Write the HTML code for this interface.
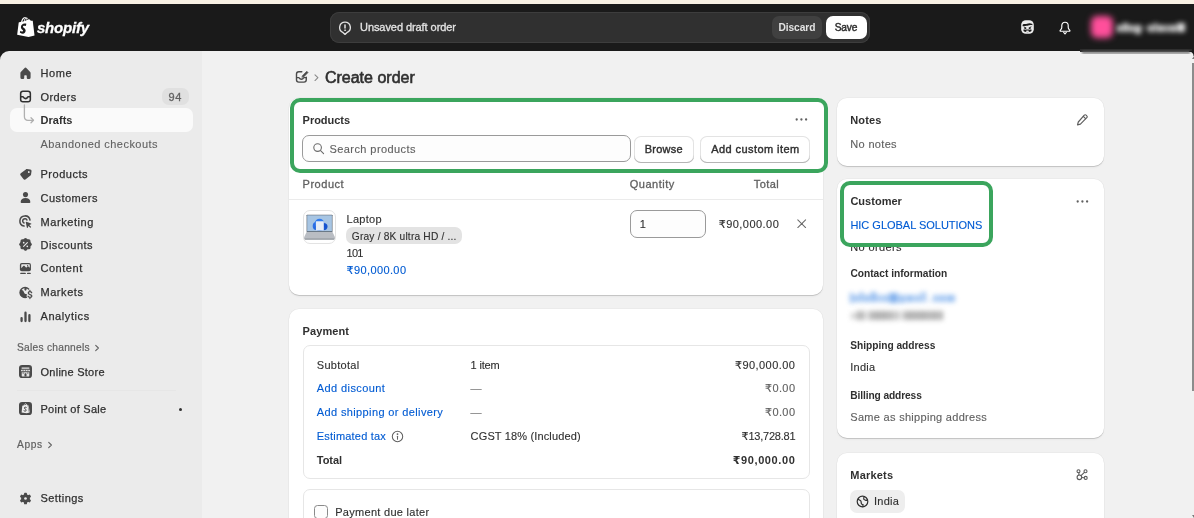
<!DOCTYPE html>
<html lang="en">
<head>
<meta charset="utf-8">
<title>Create order</title>
<style>
*{box-sizing:border-box;margin:0;padding:0}
html,body{width:1194px;height:518px;overflow:hidden;background:#f1f1f1}
body{font-family:"Liberation Sans","DejaVu Sans",sans-serif;font-size:11px;color:#303030;position:relative}
#app{will-change:transform;position:absolute;left:0;top:0;width:1194px;height:518px;overflow:hidden;background:#f1f1f1}
.abs{position:absolute}
.card{position:absolute;background:#fff;border-radius:10px;box-shadow:0 1px 0 0 rgba(0,0,0,.13),0 2px 2px 0 rgba(0,0,0,.035),0 0 0 .5px rgba(0,0,0,.05)}
.btn{position:absolute;background:#fff;border-radius:7px;box-shadow:inset 0 -1px 0 0 #b5b5b5,inset 0 0 0 1px #e3e3e3}
.ic{position:absolute;width:17px;height:17px}
.ic svg{display:block;width:17px;height:17px}
.green{position:absolute;border:4px solid #3ba55d;border-radius:10px;background:#fff}
</style>
</head>
<body>
<div id="app">
<!-- top strip + top bar -->
<div class="abs" style="left:0;top:0;width:1194px;height:4px;background:#f8f1e4"></div>
<div class="abs" style="left:0;top:4px;width:1194px;height:47px;background:#1a1a1a"></div>
<!-- sidebar -->
<div class="abs" style="left:0;top:50px;width:12px;height:12px;background:#1a1a1a"></div>
<div class="abs" style="left:0;top:51px;width:202px;height:467px;background:#ebebeb;border-top-left-radius:9px"></div>
<!-- main bg rounded top right -->
<div class="abs" style="left:202px;top:51px;width:992px;height:467px;background:#f1f1f1"></div>

<!-- TOPBAR CONTENT -->
<div class="abs" id="logo" style="left:16.5px;top:16.5px;width:18.5px;height:21px">
<svg viewBox="0 0 37 42" width="18.5" height="21"><path fill="#fff" d="M31.6 8.1c0-.2-.2-.3-.4-.4l-3.400-.3s-2.300-2.300-2.600-2.500c-.2-.2-.7-.2-.9-.1l-1.300.4C22.300 3 21 1.200 18.800 1.200h-.2C18 .4 17.200 0 16.500 0 11.400 0 9 6.400 8.200 9.600L4.600 10.700c-1.100.4-1.100.4-1.300 1.400L.3 35.600 23 39.900l12.300-2.700S31.600 8.300 31.600 8.100zM22.400 5.500l-1.900.6V5.700c0-1.300-.2-2.300-.5-3.100 1.200.1 2 1.500 2.400 2.900zM18.700 2.800c.3.900.5 2.100.5 3.700v.2l-4 1.200c.8-2.900 2.200-4.400 3.500-5.100zM17.200 1.400c.2 0 .5.100.7.200-1.700.8-3.400 2.700-4.200 6.700l-3.100 1C11.500 6.300 13.500 1.400 17.200 1.400z"/><path fill="#1a1a1a" d="M18.900 13.600l-1.500 4.500s-1.300-.7-3-.7c-2.400 0-2.500 1.500-2.500 1.900 0 2.100 5.400 2.900 5.400 7.700 0 3.800-2.400 6.300-5.700 6.300-3.900 0-5.900-2.400-5.900-2.400l1.100-3.500s2.100 1.800 3.800 1.800c1.100 0 1.600-.9 1.600-1.600 0-2.700-4.400-2.800-4.400-7.300 0-3.800 2.700-7.400 8.100-7.400 2.100 0 3.100.6 3.100.6z"/></svg>
</div>
<div class="abs" style="left:330px;top:12px;width:539.5px;height:31px;background:#303030;border-radius:9px;box-shadow:inset 0 0 0 1px #3d3d3d"></div>
<div class="abs" style="left:772px;top:15.600px;width:50px;height:23.600px;background:#404040;border-radius:7px"></div>
<div class="abs" style="left:826.300px;top:15.600px;width:40.300px;height:23.600px;background:#fff;border-radius:7px"></div>
<!-- alert bubble icon -->
<div class="abs" style="left:338px;top:20.6px;width:14px;height:15px">
<svg viewBox="0 0 14 15" width="14" height="15" fill="none" stroke="#e3e3e3" stroke-width="1.35" stroke-linecap="round" stroke-linejoin="round"><path d="M7 1.2a5.300 5.300 0 0 1 2.300 10.100L7 13.400 4.700 11.300A5.300 5.300 0 0 1 7 1.200z"/><path d="M7 3.900v3.200" stroke-width="1.500"/><circle cx="7" cy="9.200" r=".55" fill="#e3e3e3" stroke-width=".6"/></svg>
</div>
<!-- right icons -->
<div class="abs" style="left:1020.700px;top:20.400px;width:13px;height:14px">
<svg viewBox="0 0 13 14" width="13" height="14"><rect x=".2" y=".2" width="12.600" height="13.600" rx="4.600" fill="#ececec"/><path d="M1.600 4.700c1.400-1.200 2.900-.3 4.400-.9s3.100-1 5.400.2v1.300c-2-.7-3.400.1-4.900.4s-3-.1-4.900.5z" fill="#1a1a1a"/><path d="M2.700 6.800l2.500 1.300-2.500 1.200M10.300 6.800L7.800 8.100l2.500 1.200" stroke="#1a1a1a" stroke-width="1" fill="none"/><path d="M2.200 10.400c1.400-1.300 7.200-1.300 8.600 0-1.100 2.300-7.500 2.300-8.600 0z" fill="#1a1a1a"/><ellipse cx="6.500" cy="11.300" rx="1.700" ry=".7" fill="#ececec"/></svg>
</div>
<div class="abs" style="left:1058.500px;top:20.600px;width:12px;height:14px">
<svg viewBox="0 0 12 14" width="12" height="14" fill="none" stroke="#fff" stroke-width="1.150" stroke-linecap="round" stroke-linejoin="round"><path d="M6 1.200c-1.900 0-3.200 1.500-3.200 3.400v1.600c0 .9-.4 1.700-1 2.400l-.6.700c-.3.400-.1.900.4.900h8.800c.5 0 .7-.5.400-.9l-.6-.7c-.6-.7-1-1.500-1-2.400V4.600c0-1.900-1.300-3.400-3.200-3.400z"/><path d="M4.700 11.400L6 13l1.300-1.600"/></svg>
</div>
<!-- blurred account area -->
<div class="abs" style="left:1080px;top:4px;width:114px;height:50px;overflow:hidden">
  <div class="abs" style="left:0;top:44.500px;width:112px;height:3px;background:#2b2b2b;filter:blur(.6px)"></div>
  <div class="abs" style="left:2px;top:47px;width:108px;height:2.500px;background:#6a6a6a;filter:blur(1.200px);opacity:.8"></div>
  <div class="abs" style="left:11px;top:12px;width:22px;height:22px;border-radius:6px;background:#ff4f9b;filter:blur(3px)"></div>
  <div class="abs" style="left:37px;top:19px;width:70px;height:9px;filter:blur(2.800px);opacity:1">
    <div class="abs" style="left:0;top:2px;width:5px;height:7px;background:#cfcfcf"></div>
    <div class="abs" style="left:6px;top:0;width:5px;height:9px;background:#d8d8d8"></div>
    <div class="abs" style="left:12px;top:2px;width:5px;height:7px;background:#cfcfcf"></div>
    <div class="abs" style="left:18px;top:2px;width:6px;height:9px;background:#d4d4d4"></div>
    <div class="abs" style="left:26px;top:4px;width:3px;height:2px;background:#aaa"></div>
    <div class="abs" style="left:31px;top:2px;width:5px;height:7px;background:#d0d0d0"></div>
    <div class="abs" style="left:37px;top:0;width:3px;height:9px;background:#d8d8d8"></div>
    <div class="abs" style="left:41px;top:2px;width:6px;height:7px;background:#d0d0d0"></div>
    <div class="abs" style="left:48px;top:2px;width:4px;height:7px;background:#c8c8c8"></div>
    <div class="abs" style="left:53px;top:2px;width:6px;height:7px;background:#d0d0d0"></div>
    <div class="abs" style="left:60px;top:0;width:8px;height:9px;background:#e0e0e0"></div>
  </div>
</div>

<div class="abs" style="left:1189px;top:51px;width:5px;height:5px;background:radial-gradient(circle at 0 100%,rgba(26,26,26,0) 4px,#1a1a1a 5px)"></div>
<!-- SIDEBAR CONTENT -->
<div class="abs" style="left:10px;top:108.200px;width:182.500px;height:23.800px;background:#fafafa;border-radius:7px"></div>
<div class="abs" style="left:162.200px;top:88px;width:26.800px;height:17px;background:#e0e0e0;border-radius:7px"></div>
<div class="abs" style="left:17px;top:390px;width:159px;height:1px;background:#e6e6e6"></div>
<div class="abs" style="left:178.800px;top:408.300px;width:3px;height:3px;border-radius:50%;background:#303030"></div>
<div class="abs" style="left:17.0px;top:64.90px;width:17px;height:17px"><svg viewBox="0 0 20 20" width="17" height="17"><path fill="#4a4a4a" d="M8.700 3.700a1.800 1.800 0 0 1 2.600 0l4.200 4.400c.3.350.5.800.5 1.250v5.350a1.800 1.800 0 0 1-1.800 1.800h-1.400a1.300 1.300 0 0 1-1.300-1.300v-2.400a.8.8 0 0 0-.8-.8h-1.400a.8.8 0 0 0-.8.8v2.400a1.300 1.300 0 0 1-1.300 1.300H5.800A1.800 1.800 0 0 1 4 14.700V9.350c0-.45.180-.9.500-1.250z"/></svg></div>
<div class="abs" style="left:17.0px;top:88.10px;width:17px;height:17px"><svg viewBox="0 0 20 20" width="17" height="17"><g fill="none" stroke="#303030" stroke-width="1.800" stroke-linejoin="round"><rect x="4.300" y="3.800" width="11.400" height="12.400" rx="2.700"/><path d="M4.500 10.300h2.200c.45 0 .8.300.95.700.35.900 1.250 1.500 2.350 1.500s2-.6 2.350-1.500c.15-.4.500-.7.950-.7h2.200"/></g></svg></div>
<div class="abs" style="left:17.0px;top:165.80px;width:17px;height:17px"><svg viewBox="0 0 20 20" width="17" height="17"><path fill="#4a4a4a" fill-rule="evenodd" d="M10.800 3.500h4a1.700 1.700 0 0 1 1.700 1.700v4c0 .45-.18.900-.5 1.200l-5.300 5.300a1.700 1.700 0 0 1-2.400 0l-4-4a1.700 1.700 0 0 1 0-2.400l5.300-5.300c.3-.32.750-.5 1.200-.5zm2.700 4.200a1.100 1.100 0 1 0 0-2.200 1.100 1.100 0 0 0 0 2.200z" transform="rotate(8 10 10)"/></svg></div>
<div class="abs" style="left:17.0px;top:189.40px;width:17px;height:17px"><svg viewBox="0 0 20 20" width="17" height="17"><circle cx="10" cy="6.600" r="3" fill="#4a4a4a"/><path fill="#4a4a4a" d="M4.300 15.200c0-2.700 2.500-4.500 5.700-4.500s5.700 1.800 5.700 4.500c0 .8-.6 1.300-1.300 1.300H5.600c-.7 0-1.300-.5-1.300-1.300z"/></svg></div>
<div class="abs" style="left:17.0px;top:213.00px;width:17px;height:17px"><svg viewBox="0 0 20 20" width="17" height="17"><g fill="none" stroke="#4a4a4a" stroke-width="1.800" stroke-linecap="round"><path d="M15.300 8.300A6 6 0 1 0 8.300 15.300"/><path d="M11.700 8.300A2.600 2.600 0 1 0 8.300 11.700"/></g><path fill="#4a4a4a" d="M10.300 10.900c-.15-.4.250-.8.650-.65l5.700 2.100c.45.170.45.800 0 .95l-2.200.75 2 2a.55.550 0 0 1 0 .8l-.3.300a.55.550 0 0 1-.8 0l-2-2-.75 2.200c-.15.450-.8.450-.95 0z"/></svg></div>
<div class="abs" style="left:17.0px;top:236.30px;width:17px;height:17px"><svg viewBox="0 0 20 20" width="17" height="17"><path fill="#4a4a4a" d="M8.600 2.900a2 2 0 0 1 2.800 0l.7.700c.2.200.5.300.8.300h1a2 2 0 0 1 2 2v1c0 .3.100.6.300.8l.7.700a2 2 0 0 1 0 2.800l-.7.700c-.2.200-.3.500-.3.800v1a2 2 0 0 1-2 2h-1c-.3 0-.6.100-.8.300l-.7.700a2 2 0 0 1-2.800 0l-.7-.700c-.2-.2-.5-.3-.8-.3h-1a2 2 0 0 1-2-2v-1c0-.3-.1-.6-.3-.8l-.7-.7a2 2 0 0 1 0-2.800l.7-.7c.2-.2.300-.5.300-.8v-1a2 2 0 0 1 2-2h1c.3 0 .6-.1.800-.3z"/><g stroke="#ebebeb" stroke-width="1.300" stroke-linecap="round"><path d="M7.800 12.200l4.400-4.400"/></g><circle cx="7.900" cy="7.900" r="1" fill="#ebebeb"/><circle cx="12.100" cy="12.100" r="1" fill="#ebebeb"/></svg></div>
<div class="abs" style="left:17.0px;top:260.00px;width:17px;height:17px"><svg viewBox="0 0 20 20" width="17" height="17"><rect x="3.400" y="3.600" width="13" height="9.600" rx="2.200" fill="#4a4a4a"/><path fill="#ebebeb" d="M5.700 5.100h8.600c.4 0 .7.300.7.700v3.400l-1.600-1.500c-.3-.3-.8-.3-1.100 0l-1.500 1.400-2.100-2.200c-.3-.3-.8-.3-1.100 0L5 9.600V5.800c0-.4.300-.7.700-.7z"/><circle cx="12.500" cy="6.500" r=".75" fill="#4a4a4a"/><g stroke="#4a4a4a" stroke-width="1.500" stroke-linecap="round"><path d="M4.500 15.800h5.200M12.500 15.800h3"/></g></svg></div>
<div class="abs" style="left:17.0px;top:283.60px;width:17px;height:17px"><svg viewBox="0 0 20 20" width="17" height="17"><circle cx="9.500" cy="10" r="5.900" fill="none" stroke="#4a4a4a" stroke-width="1.600"/><path fill="#4a4a4a" d="M4 7.300c1.600-.6 3.200.1 3.800 1.500l.8 1.800c.3.700 1 1.200 1.700 1.300l1 .1c.8.100 1.300.9 1 1.600l-.9 2.200c-3.700 1.100-7.600-1.300-8.200-5.200zM9.200 4.200l-.5 1.700c-.2.700.1 1.400.8 1.700l1.100.4 1.100-3z"/><path d="M17.300 10.300c-.4-.8-1.100-1.200-2.100-1.200-1.200 0-2 .6-2 1.600 0 2.300 4.300 1.100 4.300 3.400 0 1-.9 1.600-2.200 1.600-1.100 0-1.900-.5-2.300-1.300M15.200 7.600v1.500M15.200 15.700v1.500" stroke="#ebebeb" stroke-width="3.600" fill="none" stroke-linecap="round"/><path d="M17.300 10.300c-.4-.8-1.100-1.200-2.100-1.200-1.200 0-2 .6-2 1.600 0 2.300 4.300 1.100 4.300 3.400 0 1-.9 1.600-2.200 1.600-1.100 0-1.900-.5-2.300-1.300M15.200 7.600v1.500M15.200 15.700v1.500" stroke="#4a4a4a" stroke-width="1.450" fill="none" stroke-linecap="round"/></svg></div>
<div class="abs" style="left:17.0px;top:307.60px;width:17px;height:17px"><svg viewBox="0 0 20 20" width="17" height="17"><g stroke="#4a4a4a" stroke-width="2.700" stroke-linecap="round"><path d="M5.400 11.800v3.500M10 5.500v9.800M14.600 8.500v6.800"/></g></svg></div>
<svg class="abs" style="left:18.800px;top:364.800px" width="13" height="13" viewBox="0 0 13 13"><rect width="13" height="13" rx="3.100" fill="#4a4a4a"/><rect x="2.600" y="2.500" width="7.800" height="1.200" rx=".3" fill="#e4e4e4"/><path d="M2.300 4.700h8.400l.5 1.500H1.800z" fill="#e4e4e4"/><path d="M4.100 4.600v1.700M6.500 4.600v1.700M8.900 4.600v1.700" stroke="#4a4a4a" stroke-width=".55"/><path d="M2.700 7.200h7.600v3.700c0 .3-.2.500-.5.500H3.200c-.3 0-.5-.2-.5-.5z" fill="#e4e4e4"/><path d="M3.600 7.200h1.200v1.900H3.600zM8.200 7.200h1.200v1.900H8.200z" fill="#4a4a4a" opacity=".55"/><path d="M5.500 11.400V9.300c0-.6.400-1 1-1s1 .4 1 1v2.100z" fill="#4a4a4a"/></svg>
<svg class="abs" style="left:18.800px;top:402.200px" width="13" height="13" viewBox="0 0 13 13"><rect width="13" height="13" rx="3.100" fill="#4a4a4a"/><path d="M3.300 3.800l4.300-1.200 1 .5.200.9 1.200 6.700-2.400.6-5-.9z" fill="#ececec"/><path d="M8.600 3.100l1 .5 1.300 6.600-.9.500z" fill="#bdbdbd"/><path d="M5.200 3.400c.1-1 .6-1.800 1.300-1.800.6 0 1 .6 1.100 1.400" fill="none" stroke="#ececec" stroke-width=".6"/><path d="M7.200 5.300c-.5-.3-1.800-.3-1.800.7 0 1.100 1.800.9 1.800 2.200 0 1-1.300 1.200-2.200.6" fill="none" stroke="#3a3a3a" stroke-width=".95" stroke-linecap="round"/></svg>
<div class="abs" style="left:17.0px;top:490.10px;width:17px;height:17px"><svg viewBox="0 0 20 20" width="17" height="17"><g fill="#4a4a4a"><circle cx="10" cy="10" r="5.100"/><rect x="8.250" y="3.200" width="3.500" height="4.500" rx="1" transform="rotate(0 10 10)"/><rect x="8.250" y="3.200" width="3.500" height="4.500" rx="1" transform="rotate(60 10 10)"/><rect x="8.250" y="3.200" width="3.500" height="4.500" rx="1" transform="rotate(120 10 10)"/><rect x="8.250" y="3.200" width="3.500" height="4.500" rx="1" transform="rotate(180 10 10)"/><rect x="8.250" y="3.200" width="3.500" height="4.500" rx="1" transform="rotate(240 10 10)"/><rect x="8.250" y="3.200" width="3.500" height="4.500" rx="1" transform="rotate(300 10 10)"/></g><circle cx="10" cy="10" r="1.600" fill="#ebebeb"/></svg></div>
<svg class="abs" style="left:20px;top:104px" width="16" height="22" viewBox="0 0 16 22" fill="none" stroke="#b0b0b0" stroke-width="1.300" stroke-linecap="round" stroke-linejoin="round"><path d="M4.400 1v11.500c0 2.200 1.300 3.800 3.600 3.800h5.200"/><path d="M11 13.800l2.500 2.500-2.500 2.500"/></svg>
<svg class="abs" style="left:94.2px;top:343.60px" width="6" height="8" viewBox="0 0 6 8" fill="none" stroke="#616161" stroke-width="1.100" stroke-linecap="round" stroke-linejoin="round"><path d="M1.700 1.300l2.700 2.700-2.700 2.700"/></svg>
<svg class="abs" style="left:46.8px;top:440.60px" width="6" height="8" viewBox="0 0 6 8" fill="none" stroke="#616161" stroke-width="1.100" stroke-linecap="round" stroke-linejoin="round"><path d="M1.700 1.300l2.700 2.700-2.700 2.700"/></svg>


<!-- PRODUCTS CARD -->
<div class="card" style="left:289px;top:98px;width:534px;height:196.500px"></div>
<div class="green" style="left:290px;top:98px;width:538px;height:74.800px"></div>
<div class="abs" style="left:302.300px;top:135.400px;width:328.500px;height:27px;background:#fdfdfd;border:1px solid #9a9a9a;border-radius:7px"></div>
<div class="btn" style="left:634.300px;top:135.500px;width:59.300px;height:27px"></div>
<div class="btn" style="left:700.300px;top:135.500px;width:109.400px;height:27px"></div>
<div class="abs" style="left:289px;top:199px;width:534px;height:1px;background:#ebebeb"></div>
<!-- thumbnail -->
<div class="abs" style="left:302.600px;top:210px;width:33.500px;height:33.500px;border:1px solid #e3e3e3;border-radius:7px;background:#fff;overflow:hidden">
<svg viewBox="0 0 31.500 31.500" width="31.500" height="31.500" style="filter:blur(.35px)"><rect x="2.600" y="3.700" width="25.900" height="17.300" rx=".6" fill="#5c6670"/><rect x="3.200" y="4.300" width="24.700" height="15.900" fill="#a7c5e3"/><ellipse cx="12.300" cy="15" rx="3.600" ry="4" fill="#2a6fe6"/><ellipse cx="15.500" cy="11.600" rx="4.600" ry="3.800" fill="#2f7bef"/><ellipse cx="19.500" cy="15.600" rx="4" ry="3.600" fill="#1553cf"/><ellipse cx="15.500" cy="17" rx="5" ry="2.800" fill="#1d62dc"/><rect x="11.900" y="10.200" width="7.900" height="9.300" rx=".5" fill="#e6edf6"/><path d="M2.600 21h25.900l3 6.300H-.4z" fill="#b9bdc3"/><path d="M-.4 27.300h31.900v.9c0 .3-.3.500-.6.500H.2c-.3 0-.6-.2-.6-.5z" fill="#8d939a"/></svg>
</div>
<!-- variant pill -->
<div class="abs" style="left:346px;top:227.300px;width:116px;height:16.600px;background:#e3e3e3;border-radius:7px"></div>
<!-- qty input -->
<div class="abs" style="left:629.700px;top:210px;width:76.400px;height:27.600px;background:#fdfdfd;border:1px solid #9a9a9a;border-radius:7px"></div>

<!-- PAYMENT CARD -->
<div class="card" style="left:289px;top:308.500px;width:534px;height:240px"></div>
<div class="abs" style="left:302.500px;top:345px;width:507.200px;height:134px;border:1px solid #e6e6e6;border-radius:7px"></div>
<div class="abs" style="left:302.500px;top:489px;width:507.200px;height:60px;border:1px solid #e6e6e6;border-radius:7px"></div>
<div class="abs" style="left:314px;top:504.800px;width:13.800px;height:13.800px;border:1px solid #8a8a8a;border-radius:3.500px;background:#fdfdfd"></div>

<!-- NOTES CARD -->
<div class="card" style="left:837px;top:97.500px;width:267.300px;height:68.500px"></div>
<!-- CUSTOMER CARD -->
<div class="card" style="left:837px;top:179px;width:267.300px;height:259.300px"></div>
<div class="green" style="left:840px;top:181px;width:153.300px;height:65.600px;z-index:2"></div>
<!-- blurred contact -->
<div class="abs" style="left:850px;top:292px;width:108px;height:11px;filter:blur(2.400px);opacity:.78">
<div class="abs" style="left:0;top:1px;width:3px;height:10px;background:#6aa2ea"></div>
<div class="abs" style="left:4px;top:3px;width:5px;height:7px;background:#7fb0ee"></div>
<div class="abs" style="left:10px;top:0;width:3px;height:10px;background:#6aa2ea"></div>
<div class="abs" style="left:14px;top:3px;width:6px;height:7px;background:#7fb0ee"></div>
<div class="abs" style="left:21px;top:0;width:5px;height:10px;background:#6aa2ea"></div>
<div class="abs" style="left:27px;top:3px;width:5px;height:7px;background:#8ab6ef"></div>
<div class="abs" style="left:33px;top:3px;width:5px;height:7px;background:#7fb0ee"></div>
<div class="abs" style="left:39px;top:1px;width:9px;height:10px;background:#5f9be8"></div>
<div class="abs" style="left:49px;top:3px;width:6px;height:8px;background:#7fb0ee"></div>
<div class="abs" style="left:56px;top:3px;width:8px;height:7px;background:#7fb0ee"></div>
<div class="abs" style="left:65px;top:3px;width:5px;height:7px;background:#86b4ee"></div>
<div class="abs" style="left:71px;top:0;width:2px;height:10px;background:#6aa2ea"></div>
<div class="abs" style="left:74px;top:0;width:2px;height:10px;background:#6aa2ea"></div>
<div class="abs" style="left:79px;top:8px;width:2px;height:2px;background:#9dc2f2"></div>
<div class="abs" style="left:83px;top:3px;width:5px;height:7px;background:#86b4ee"></div>
<div class="abs" style="left:89px;top:3px;width:6px;height:7px;background:#7fb0ee"></div>
<div class="abs" style="left:96px;top:3px;width:9px;height:7px;background:#7fb0ee"></div>
</div>
<div class="abs" style="left:850.500px;top:310.500px;width:94px;height:11px;filter:blur(2.400px);opacity:.72">
<div class="abs" style="left:0;top:2px;width:5px;height:6px;background:#bdbdbd"></div>
<div class="abs" style="left:6px;top:0;width:5px;height:9px;background:#8c8c8c"></div>
<div class="abs" style="left:12px;top:0;width:3px;height:9px;background:#9a9a9a"></div>
<div class="abs" style="left:18px;top:0;width:5px;height:9px;background:#8c8c8c"></div>
<div class="abs" style="left:24px;top:0;width:5px;height:9px;background:#808080"></div>
<div class="abs" style="left:30px;top:0;width:5px;height:9px;background:#808080"></div>
<div class="abs" style="left:36px;top:0;width:5px;height:9px;background:#8c8c8c"></div>
<div class="abs" style="left:42px;top:0;width:3px;height:9px;background:#9a9a9a"></div>
<div class="abs" style="left:46px;top:0;width:3px;height:9px;background:#a5a5a5"></div>
<div class="abs" style="left:52px;top:0;width:4px;height:9px;background:#8c8c8c"></div>
<div class="abs" style="left:57px;top:0;width:5px;height:9px;background:#808080"></div>
<div class="abs" style="left:63px;top:0;width:5px;height:9px;background:#858585"></div>
<div class="abs" style="left:69px;top:0;width:5px;height:9px;background:#808080"></div>
<div class="abs" style="left:75px;top:0;width:5px;height:9px;background:#8c8c8c"></div>
<div class="abs" style="left:81px;top:0;width:5px;height:9px;background:#858585"></div>
<div class="abs" style="left:87px;top:0;width:5px;height:9px;background:#909090"></div>
</div>
<!-- MARKETS CARD -->
<div class="card" style="left:837px;top:452.500px;width:267.300px;height:100px"></div>
<div class="abs" style="left:850.300px;top:490px;width:55px;height:22.700px;background:#eeeeee;border-radius:7px"></div>

<!-- scrollbar -->
<div class="abs" style="left:1192px;top:63px;width:2px;height:328px;background:#8c8c8c"></div>
<div class="abs" style="left:1191.500px;top:55.500px;width:0;height:0;border-left:2.500px solid transparent;border-right:2.500px solid transparent;border-bottom:3px solid #7a7a7a"></div>
<div class="abs" style="left:1191.500px;top:514.500px;width:0;height:0;border-left:2.500px solid transparent;border-right:2.500px solid transparent;border-top:3px solid #7a7a7a"></div>

<svg class="abs" style="left:314.400px;top:73.500px" width="5" height="7.500" viewBox="0 0 5 7.500" fill="none" stroke="#8a8a8a" stroke-width="1.100" stroke-linecap="round" stroke-linejoin="round"><path d="M1 .800l2.900 2.900L1 6.600"/></svg>
<svg class="abs" style="left:293.800px;top:68.600px" width="15.600" height="15.600" viewBox="0 0 15 15" fill="none" stroke="#4a4a4a" stroke-width="1.350" stroke-linecap="round" stroke-linejoin="round"><path d="M7.500 2.600H4.600a2.200 2.200 0 0 0-2.200 2.200v5.600a2.200 2.200 0 0 0 2.200 2.200h5a2.200 2.200 0 0 0 2.200-2.200V8"/><path d="M2.600 8.300h1.900c.3 0 .5.200.6.400.300.700 1 1.200 2 1.200s1.700-.5 2-1.200c.1-.2.300-.4.600-.4h1.900"/><path d="M8.300 6.300l4-4.100 1.200 1.200-4 4.100-1.600.4z" fill="#4a4a4a" stroke-width=".6"/></svg>
<svg class="abs" style="left:311.500px;top:142.300px" width="13" height="13" viewBox="0 0 13 13" fill="none" stroke="#6b6b6b" stroke-width="1.100" stroke-linecap="round"><circle cx="5.600" cy="5.600" r="3.800"/><path d="M8.600 8.600l3 3"/></svg>
<svg class="abs" style="left:795.3px;top:118.30px" width="13" height="3" viewBox="0 0 13 3" fill="#616161"><circle cx="1.700" cy="1.500" r="1.150"/><circle cx="6.400" cy="1.500" r="1.150"/><circle cx="11.100" cy="1.500" r="1.150"/></svg>
<svg class="abs" style="z-index:3;left:1076px;top:199.70px" width="13" height="3" viewBox="0 0 13 3" fill="#616161"><circle cx="1.700" cy="1.500" r="1.150"/><circle cx="6.400" cy="1.500" r="1.150"/><circle cx="11.100" cy="1.500" r="1.150"/></svg>
<svg class="abs" style="left:797.200px;top:219px" width="9.400" height="9.400" viewBox="0 0 9.400 9.400" fill="none" stroke="#6b6b6b" stroke-width="1.050" stroke-linecap="round"><path d="M.8 .8l7.800 7.800M8.600 .8L.8 8.600"/></svg>
<svg class="abs" style="left:391.300px;top:429.600px" width="13" height="13" viewBox="0 0 13 13" fill="none" stroke="#616161" stroke-width="1.050" stroke-linecap="round"><circle cx="6.500" cy="6.500" r="5.200"/><path d="M6.500 6.200v3"/><circle cx="6.500" cy="4.100" r=".4" fill="#616161"/></svg>
<svg class="abs" style="left:1074.600px;top:113.100px" width="14" height="14" viewBox="0 0 14 14" fill="none" stroke="#5c5c5c" stroke-width="1.150" stroke-linecap="round" stroke-linejoin="round"><path d="M9.300 2.200a1.300 1.300 0 0 1 1.900 0l.6.600a1.300 1.300 0 0 1 0 1.900l-6.400 6.400-2.900.8.800-2.900z"/><path d="M8.300 3.400l2.300 2.300"/></svg>
<svg class="abs" style="left:1075px;top:467.500px" width="14" height="14" viewBox="0 0 14 14" fill="none" stroke="#5c5c5c" stroke-width="1.100" stroke-linecap="round"><circle cx="4.400" cy="9.300" r="2.300"/><circle cx="3.500" cy="3.200" r="1.500"/><circle cx="10.500" cy="3.200" r="1.500"/><circle cx="10.700" cy="9.900" r="1.500"/><path d="M3.900 7v-2.300M6 7.600l3.400-3.300M6.700 9.500l2.500.3"/></svg>
<svg class="abs" style="left:855.500px;top:495px" width="13" height="13" viewBox="0 0 13 13" fill="none" stroke="#303030" stroke-width="1.200" stroke-linecap="round" stroke-linejoin="round"><circle cx="6.500" cy="6.500" r="5.300"/><path d="M2 4.200l2.300 1.300c.5.300.8.800.8 1.300l.2 1.500c.1.600.5 1 1.100 1.100l.7.100-.3 2.200M8.200 1.600L7.700 3.200c-.2.500 0 1 .5 1.300l1.300.7c.5.300 1.100.2 1.500-.2l.5-.5"/></svg>
<span style="position:absolute;top:65.00px;line-height:16px;font-size:11px;font-weight:400;color:#303030;white-space:nowrap;left:40.50px;letter-spacing:0.552px;-webkit-text-stroke:0.25px #303030;">Home</span>
<span style="position:absolute;top:89.00px;line-height:16px;font-size:11px;font-weight:400;color:#303030;white-space:nowrap;left:40.50px;letter-spacing:0.415px;-webkit-text-stroke:0.25px #303030;">Orders</span>
<span style="position:absolute;top:89.00px;line-height:16px;font-size:11px;font-weight:400;color:#616161;white-space:nowrap;left:168.50px;letter-spacing:0.750px;-webkit-text-stroke:0.3px #616161;">94</span>
<span style="position:absolute;top:112.00px;line-height:16px;font-size:11px;font-weight:700;color:#303030;white-space:nowrap;left:40.50px;letter-spacing:0.041px;">Drafts</span>
<span style="position:absolute;top:136.00px;line-height:16px;font-size:11px;font-weight:400;color:#616161;white-space:nowrap;left:40.50px;letter-spacing:0.451px;-webkit-text-stroke:0.1px #616161;">Abandoned checkouts</span>
<span style="position:absolute;top:166.00px;line-height:16px;font-size:11px;font-weight:400;color:#303030;white-space:nowrap;left:40.50px;letter-spacing:0.511px;-webkit-text-stroke:0.25px #303030;">Products</span>
<span style="position:absolute;top:190.00px;line-height:16px;font-size:11px;font-weight:400;color:#303030;white-space:nowrap;left:40.50px;letter-spacing:0.477px;-webkit-text-stroke:0.25px #303030;">Customers</span>
<span style="position:absolute;top:214.00px;line-height:16px;font-size:11px;font-weight:400;color:#303030;white-space:nowrap;left:40.50px;letter-spacing:0.563px;-webkit-text-stroke:0.25px #303030;">Marketing</span>
<span style="position:absolute;top:237.00px;line-height:16px;font-size:11px;font-weight:400;color:#303030;white-space:nowrap;left:40.50px;letter-spacing:0.463px;-webkit-text-stroke:0.25px #303030;">Discounts</span>
<span style="position:absolute;top:260.00px;line-height:16px;font-size:11px;font-weight:400;color:#303030;white-space:nowrap;left:40.50px;letter-spacing:0.528px;-webkit-text-stroke:0.25px #303030;">Content</span>
<span style="position:absolute;top:284.00px;line-height:16px;font-size:11px;font-weight:400;color:#303030;white-space:nowrap;left:40.50px;letter-spacing:0.546px;-webkit-text-stroke:0.25px #303030;">Markets</span>
<span style="position:absolute;top:308.00px;line-height:16px;font-size:11px;font-weight:400;color:#303030;white-space:nowrap;left:40.50px;letter-spacing:0.584px;-webkit-text-stroke:0.25px #303030;">Analytics</span>
<span style="position:absolute;top:340.00px;line-height:16px;font-size:10.2px;font-weight:400;color:#616161;white-space:nowrap;left:17.00px;letter-spacing:0.269px;-webkit-text-stroke:0.2px #616161;">Sales channels</span>
<span style="position:absolute;top:364.00px;line-height:16px;font-size:11px;font-weight:400;color:#303030;white-space:nowrap;left:40.50px;letter-spacing:0.259px;-webkit-text-stroke:0.25px #303030;">Online Store</span>
<span style="position:absolute;top:401.00px;line-height:16px;font-size:11px;font-weight:400;color:#303030;white-space:nowrap;left:40.50px;letter-spacing:0.269px;-webkit-text-stroke:0.25px #303030;">Point of Sale</span>
<span style="position:absolute;top:437.00px;line-height:16px;font-size:10.2px;font-weight:400;color:#616161;white-space:nowrap;left:17.00px;letter-spacing:0.589px;-webkit-text-stroke:0.2px #616161;">Apps</span>
<span style="position:absolute;top:490.00px;line-height:16px;font-size:11px;font-weight:400;color:#303030;white-space:nowrap;left:40.50px;letter-spacing:0.436px;-webkit-text-stroke:0.25px #303030;">Settings</span>
<span style="position:absolute;top:20.00px;line-height:16px;font-size:15px;font-weight:700;color:#fff;white-space:nowrap;left:37.00px;letter-spacing:-0.224px;-webkit-text-stroke:0.3px #fff;font-style:italic;">shopify</span>
<span style="position:absolute;top:19.00px;line-height:16px;font-size:11px;font-weight:400;color:#e3e3e3;white-space:nowrap;left:360.00px;letter-spacing:-0.068px;-webkit-text-stroke:0.3px #e3e3e3;">Unsaved draft order</span>
<span style="position:absolute;top:20.00px;line-height:16px;font-size:10.2px;font-weight:700;color:#e3e3e3;white-space:nowrap;left:778.40px;letter-spacing:-0.062px;">Discard</span>
<span style="position:absolute;top:20.00px;line-height:16px;font-size:10.2px;font-weight:400;color:#303030;white-space:nowrap;left:834.70px;letter-spacing:-0.145px;-webkit-text-stroke:0.45px #303030;">Save</span>
<span style="position:absolute;top:70.00px;line-height:16px;font-size:16px;font-weight:400;color:#303030;white-space:nowrap;left:324.90px;letter-spacing:0.007px;-webkit-text-stroke:0.6px #303030;">Create order</span>
<span style="position:absolute;top:112.00px;line-height:16px;font-size:11px;font-weight:700;color:#303030;white-space:nowrap;left:302.60px;letter-spacing:-0.027px;">Products</span>
<span style="position:absolute;top:141.00px;line-height:16px;font-size:11px;font-weight:400;color:#616161;white-space:nowrap;left:329.50px;letter-spacing:0.421px;-webkit-text-stroke:0.12px #616161;">Search products</span>
<span style="position:absolute;top:141.00px;line-height:16px;font-size:11px;font-weight:400;color:#303030;white-space:nowrap;left:644.70px;letter-spacing:0.263px;-webkit-text-stroke:0.4px #303030;">Browse</span>
<span style="position:absolute;top:141.00px;line-height:16px;font-size:11px;font-weight:400;color:#303030;white-space:nowrap;left:711.20px;letter-spacing:0.434px;-webkit-text-stroke:0.4px #303030;">Add custom item</span>
<span style="position:absolute;top:176.00px;line-height:16px;font-size:11px;font-weight:400;color:#616161;white-space:nowrap;left:302.60px;letter-spacing:0.513px;-webkit-text-stroke:0.3px #616161;">Product</span>
<span style="position:absolute;top:176.00px;line-height:16px;font-size:11px;font-weight:400;color:#616161;white-space:nowrap;left:629.70px;letter-spacing:0.519px;-webkit-text-stroke:0.3px #616161;">Quantity</span>
<span style="position:absolute;top:176.00px;line-height:16px;font-size:11px;font-weight:400;color:#616161;white-space:nowrap;right:414.80px;letter-spacing:0.438px;-webkit-text-stroke:0.3px #616161;">Total</span>
<span style="position:absolute;top:211.00px;line-height:16px;font-size:11px;font-weight:400;color:#303030;white-space:nowrap;left:346.60px;letter-spacing:0.269px;-webkit-text-stroke:0.12px #303030;">Laptop</span>
<span style="position:absolute;top:229.00px;line-height:16px;font-size:10.2px;font-weight:400;color:#303030;white-space:nowrap;left:351.80px;letter-spacing:0.190px;-webkit-text-stroke:0.12px #303030;">Gray / 8K ultra HD / ...</span>
<span style="position:absolute;top:245.00px;line-height:16px;font-size:11px;font-weight:400;color:#303030;white-space:nowrap;left:346.60px;letter-spacing:-0.780px;-webkit-text-stroke:0.12px #303030;">101</span>
<span style="position:absolute;top:262.00px;line-height:16px;font-size:11px;font-weight:400;color:#005bd3;white-space:nowrap;left:346.60px;letter-spacing:0.385px;-webkit-text-stroke:0.12px #005bd3;">&#8377;90,000.00</span>
<span style="position:absolute;top:216.00px;line-height:16px;font-size:11px;font-weight:400;color:#303030;white-space:nowrap;left:639.70px;-webkit-text-stroke:0.12px #303030;">1</span>
<span style="position:absolute;top:216.00px;line-height:16px;font-size:11px;font-weight:400;color:#303030;white-space:nowrap;right:414.80px;letter-spacing:0.451px;-webkit-text-stroke:0.12px #303030;">&#8377;90,000.00</span>
<span style="position:absolute;top:323.00px;line-height:16px;font-size:11px;font-weight:700;color:#303030;white-space:nowrap;left:302.50px;letter-spacing:0.107px;">Payment</span>
<span style="position:absolute;top:357.00px;line-height:16px;font-size:11px;font-weight:400;color:#303030;white-space:nowrap;left:316.80px;letter-spacing:0.289px;-webkit-text-stroke:0.12px #303030;">Subtotal</span>
<span style="position:absolute;top:357.00px;line-height:16px;font-size:11px;font-weight:400;color:#303030;white-space:nowrap;left:470.60px;letter-spacing:-0.194px;-webkit-text-stroke:0.12px #303030;">1 item</span>
<span style="position:absolute;top:357.00px;line-height:16px;font-size:11px;font-weight:400;color:#303030;white-space:nowrap;right:398.60px;letter-spacing:0.451px;-webkit-text-stroke:0.12px #303030;">&#8377;90,000.00</span>
<span style="position:absolute;top:380.00px;line-height:16px;font-size:11px;font-weight:400;color:#005bd3;white-space:nowrap;left:316.80px;letter-spacing:0.399px;-webkit-text-stroke:0.12px #005bd3;">Add discount</span>
<span style="position:absolute;top:380.00px;line-height:16px;font-size:11px;font-weight:400;color:#8a8a8a;white-space:nowrap;left:470.60px;letter-spacing:-0.800px;-webkit-text-stroke:0.12px #8a8a8a;">&mdash;</span>
<span style="position:absolute;top:380.00px;line-height:16px;font-size:11px;font-weight:400;color:#616161;white-space:nowrap;right:398.60px;letter-spacing:0.395px;-webkit-text-stroke:0.12px #616161;">&#8377;0.00</span>
<span style="position:absolute;top:404.00px;line-height:16px;font-size:11px;font-weight:400;color:#005bd3;white-space:nowrap;left:316.80px;letter-spacing:0.374px;-webkit-text-stroke:0.12px #005bd3;">Add shipping or delivery</span>
<span style="position:absolute;top:404.00px;line-height:16px;font-size:11px;font-weight:400;color:#8a8a8a;white-space:nowrap;left:470.60px;letter-spacing:-0.800px;-webkit-text-stroke:0.12px #8a8a8a;">&mdash;</span>
<span style="position:absolute;top:404.00px;line-height:16px;font-size:11px;font-weight:400;color:#616161;white-space:nowrap;right:398.60px;letter-spacing:0.395px;-webkit-text-stroke:0.12px #616161;">&#8377;0.00</span>
<span style="position:absolute;top:428.00px;line-height:16px;font-size:11px;font-weight:400;color:#005bd3;white-space:nowrap;left:316.80px;letter-spacing:0.197px;-webkit-text-stroke:0.12px #005bd3;">Estimated tax</span>
<span style="position:absolute;top:428.00px;line-height:16px;font-size:11px;font-weight:400;color:#303030;white-space:nowrap;left:470.60px;letter-spacing:0.144px;-webkit-text-stroke:0.12px #303030;">CGST 18% (Included)</span>
<span style="position:absolute;top:428.00px;line-height:16px;font-size:11px;font-weight:400;color:#303030;white-space:nowrap;right:398.60px;letter-spacing:-0.215px;-webkit-text-stroke:0.12px #303030;">&#8377;13,728.81</span>
<span style="position:absolute;top:452.00px;line-height:16px;font-size:11px;font-weight:700;color:#303030;white-space:nowrap;left:316.80px;letter-spacing:-0.042px;">Total</span>
<span style="position:absolute;top:452.00px;line-height:16px;font-size:11px;font-weight:700;color:#303030;white-space:nowrap;right:398.60px;letter-spacing:0.601px;">&#8377;90,000.00</span>
<span style="position:absolute;top:504.00px;line-height:16px;font-size:11px;font-weight:400;color:#303030;white-space:nowrap;left:335.20px;letter-spacing:0.295px;-webkit-text-stroke:0.12px #303030;">Payment due later</span>
<span style="position:absolute;top:112.00px;line-height:16px;font-size:11px;font-weight:700;color:#303030;white-space:nowrap;left:850.30px;letter-spacing:0.109px;">Notes</span>
<span style="position:absolute;top:136.00px;line-height:16px;font-size:11px;font-weight:400;color:#616161;white-space:nowrap;left:850.30px;letter-spacing:0.324px;-webkit-text-stroke:0.12px #616161;">No notes</span>
<span style="position:absolute;top:239.00px;line-height:16px;font-size:11px;font-weight:400;color:#303030;white-space:nowrap;left:850.30px;letter-spacing:0.375px;-webkit-text-stroke:0.12px #303030;z-index:1;">No orders</span>
<span style="position:absolute;top:193.00px;line-height:16px;font-size:11px;font-weight:700;color:#303030;white-space:nowrap;left:850.40px;letter-spacing:0.022px;z-index:3;">Customer</span>
<span style="position:absolute;top:217.00px;line-height:16px;font-size:11px;font-weight:400;color:#005bd3;white-space:nowrap;left:850.40px;letter-spacing:-0.013px;-webkit-text-stroke:0.12px #005bd3;z-index:3;">HIC GLOBAL SOLUTIONS</span>
<span style="position:absolute;top:266.00px;line-height:16px;font-size:10.2px;font-weight:700;color:#303030;white-space:nowrap;left:850.40px;letter-spacing:0.001px;">Contact information</span>
<span style="position:absolute;top:338.00px;line-height:16px;font-size:10.2px;font-weight:700;color:#303030;white-space:nowrap;left:850.30px;letter-spacing:-0.032px;">Shipping address</span>
<span style="position:absolute;top:359.00px;line-height:16px;font-size:11px;font-weight:400;color:#303030;white-space:nowrap;left:850.30px;letter-spacing:0.235px;-webkit-text-stroke:0.12px #303030;">India</span>
<span style="position:absolute;top:388.00px;line-height:16px;font-size:10.2px;font-weight:700;color:#303030;white-space:nowrap;left:850.30px;letter-spacing:-0.109px;">Billing address</span>
<span style="position:absolute;top:409.00px;line-height:16px;font-size:11px;font-weight:400;color:#616161;white-space:nowrap;left:850.30px;letter-spacing:0.298px;-webkit-text-stroke:0.12px #616161;">Same as shipping address</span>
<span style="position:absolute;top:467.00px;line-height:16px;font-size:11px;font-weight:700;color:#303030;white-space:nowrap;left:850.30px;letter-spacing:0.204px;">Markets</span>
<span style="position:absolute;top:493.00px;line-height:16px;font-size:11px;font-weight:400;color:#303030;white-space:nowrap;left:874.00px;letter-spacing:0.235px;-webkit-text-stroke:0.12px #303030;">India</span>
</div>
</body>
</html>
